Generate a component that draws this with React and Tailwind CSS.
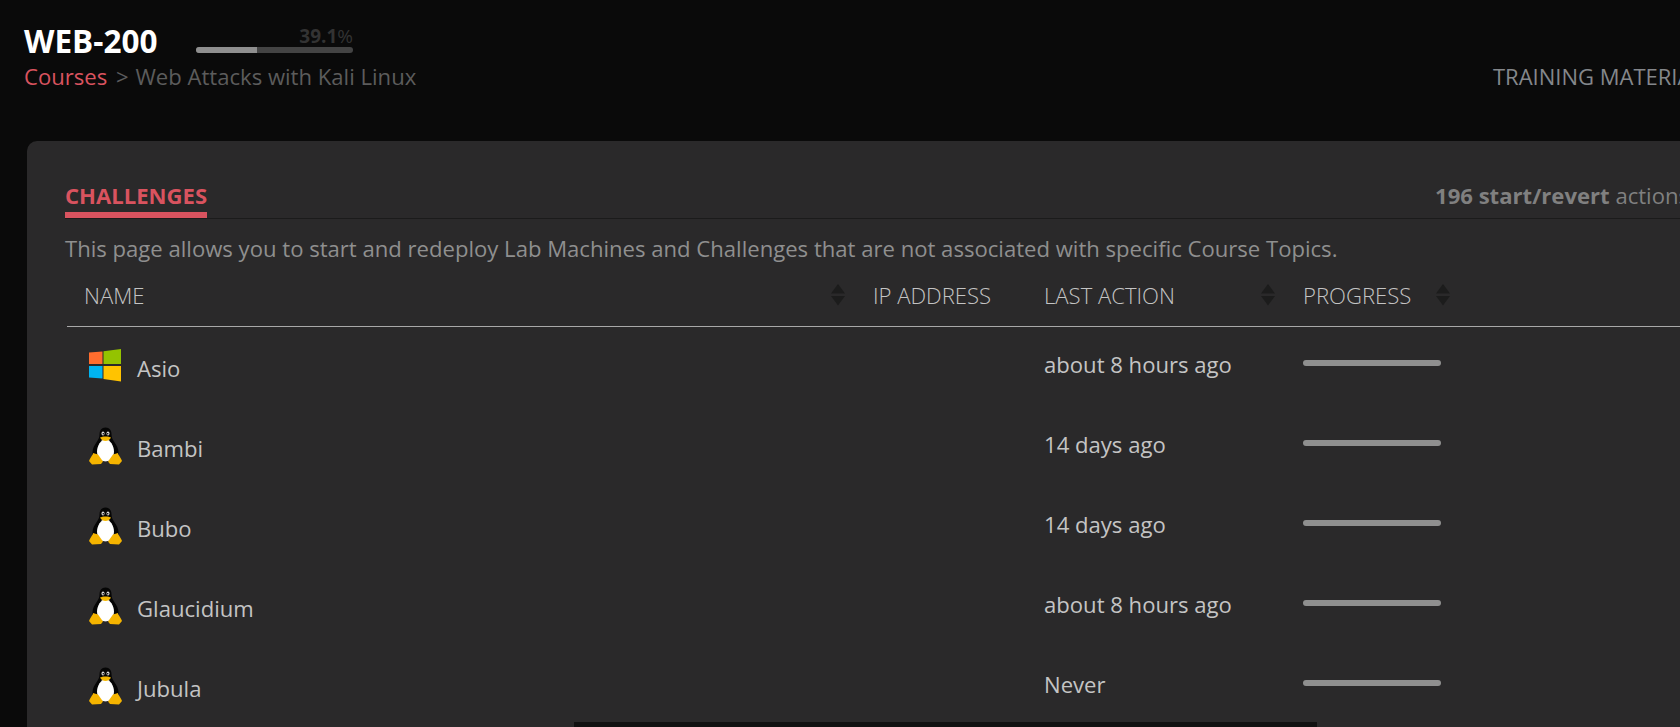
const rows = [
  { name: "Asio", os: "win", action: "about 8 hours ago" },
  { name: "Bambi", os: "linux", action: "14 days ago" },
  { name: "Bubo", os: "linux", action: "14 days ago" },
  { name: "Glaucidium", os: "linux", action: "about 8 hours ago" },
  { name: "Jubula", os: "linux", action: "Never" },
];

function WinIcon() {
  return (
    <svg width="33" height="33" viewBox="0 0 33 33" className="shrink-0">
      <polygon points="0,3.5 13.500,2.500 13.500,15 0,15" fill="#ff6d2e" />
      <polygon points="14.500,2.200 32,0 32,15 14.500,15" fill="#94c300" />
      <polygon points="0,17 13.500,17 13.500,29.500 0,28.500" fill="#00b4f1" />
      <polygon points="14.500,17 32,17 32,32.500 14.500,30" fill="#ffc300" />
    </svg>
  );
}

function Penguin() {
  return (
    <svg width="33" height="38" viewBox="0 0 33 38" className="shrink-0">
      <path d="M16.500 0.500c-4 0-6 3-6 7 0 3-1 4.500-2.500 7-2.500 3.500-4.500 7-4.500 11 0 4 2.500 8 6 9.500l14 0c3.500-1.500 6-5.500 6-9.500 0-4-2-7.500-4.500-11-1.500-2.500-2.500-4-2.500-7 0-4-2-7-6-7z" fill="#050505" />
      <path d="M16.500 11.500c-4.500 1.500-8.500 7-8.500 13 0 5.500 3.500 10 8.500 10s8.500-4.500 8.500-10c0-6-4-11.500-8.500-13z" fill="#ffffff" />
      <ellipse cx="14" cy="6.500" rx="1.500" ry="2" fill="#d8d8d8" />
      <ellipse cx="19" cy="6.500" rx="1.500" ry="2" fill="#d8d8d8" />
      <circle cx="14.300" cy="6.800" r="0.800" fill="#000" />
      <circle cx="18.700" cy="6.800" r="0.800" fill="#000" />
      <path d="M11 10.500c2-1.500 9-1.500 11 0-1 2.500-3.500 3.500-5.500 3.500s-4.500-1-5.500-3.500z" fill="#f5b800" />
      <path d="M4 26l5 1.500 5 7-2 2.500-9 .5-3-3.500c1-2.500 2-4 4-7z" fill="#f5b400" />
      <path d="M29 26l-5 1.500-5 7 2 2.500 9 .5 3-3.500c-1-2.500-2-4-4-7z" fill="#f5b400" />
    </svg>
  );
}

function Sort() {
  return (
    <svg width="14" height="22" viewBox="0 0 14 22" className="shrink-0">
      <polygon points="7,0 14,9.500 0,9.500" fill="#1c1c1c" />
      <polygon points="0,12 14,12 7,21.500" fill="#1c1c1c" />
    </svg>
  );
}

export default function App() {
  return (
    <div className="relative h-[727px] w-[1680px] overflow-hidden bg-[#0a0a0a] font-['Open_Sans',sans-serif]">
      <div className="w-[2000px]">
        <header className="flex h-[141px] items-start pl-6 pt-[19px]">
          <div className="w-[1469px] shrink-0">
            <div className="flex items-start">
              <h1 className="w-[172px] pt-[1px] text-[31.5px] font-bold leading-[41px] text-white">WEB-200</h1>
              <div className="mt-[6px] w-[157px]">
                <div className="text-right text-[19px] leading-[22px] text-[#333333]">
                  <span className="font-bold">39.1</span>%
                </div>
                <div className="h-[6px] overflow-hidden rounded-[3px] bg-[#444444]">
                  <div className="h-full w-[39.1%] bg-[#8f8f8f]" />
                </div>
              </div>
            </div>
            <div className="text-[22.1px] leading-[30px] text-[#5c5c5c]">
              <span className="text-[#d9535f]">Courses</span> <span className="ml-[3px] mr-[1px]">&gt;</span> Web Attacks with Kali Linux
            </div>
          </div>
          <div className="mt-[42px] shrink-0 text-[22px] leading-[30px] text-[#84878b]">TRAINING MATERIALS</div>
        </header>
        <main className="ml-[27px] rounded-[10px] bg-[#2a292a] pb-[100px] pl-[38px] pt-[36px]">
          <div className="flex h-[42px] items-end border-b border-[#1b1b1b]">
            <div className="w-[1370px] shrink-0">
              <span className="inline-block h-[41px] border-b-[6px] border-[#d9535f] text-[22.1px] font-bold leading-[37px] text-[#d9535f]">CHALLENGES</span>
            </div>
            <div className="mb-[8px] shrink-0 text-[22.1px] leading-[30px] text-[#808080]">
              <span className="font-bold">196 start/revert</span> actions remaining
            </div>
          </div>
          <p className="mt-[14px] text-[22.1px] leading-[30px] text-[#8f8f8f]">
            This page allows you to start and redeploy Lab Machines and Challenges that are not associated with specific Course Topics.
          </p>
          <div className="ml-[2px]">
            <div className="flex h-[64px] items-center border-b border-[#a8a8a8] pt-[2px] text-[22.1px] font-light text-[#c4c4c4]">
              <div className="flex w-[788px] items-center justify-between pl-[17px] pr-[10px]">
                <span>NAME</span>
                <Sort />
              </div>
              <div className="w-[172px] pl-[18px]">IP ADDRESS</div>
              <div className="flex w-[258px] items-center justify-between pl-[17px] pr-[10px]">
                <span>LAST ACTION</span>
                <Sort />
              </div>
              <div className="flex w-[165px] items-center justify-between pl-[18px]">
                <span>PROGRESS</span>
                <Sort />
              </div>
            </div>
            {rows.map((r) => (
              <div key={r.name} className="flex h-[80px] items-center pb-[4px] text-[22.1px] text-[#c4c4c4]">
                <div className="flex w-[960px] items-center gap-[16px] pl-[22px]">
                  <div className="flex w-[32px] translate-y-[1px] items-center justify-center">
                    {r.os === "win" ? <WinIcon /> : <Penguin />}
                  </div>
                  <span className="translate-y-[4px]">{r.name}</span>
                </div>
                <div className="w-[258px] pl-[17px]">{r.action}</div>
                <div className="w-[161px] pl-[18px]">
                  <div className="h-[6px] w-[138px] -translate-y-[2px] rounded-[3px] bg-[#8f8f8f]" />
                </div>
              </div>
            ))}
          </div>
        </main>
      </div>
      <div className="absolute bottom-0 left-[574px] h-[5px] w-[743px] bg-[#111111]" />
    </div>
  );
}
